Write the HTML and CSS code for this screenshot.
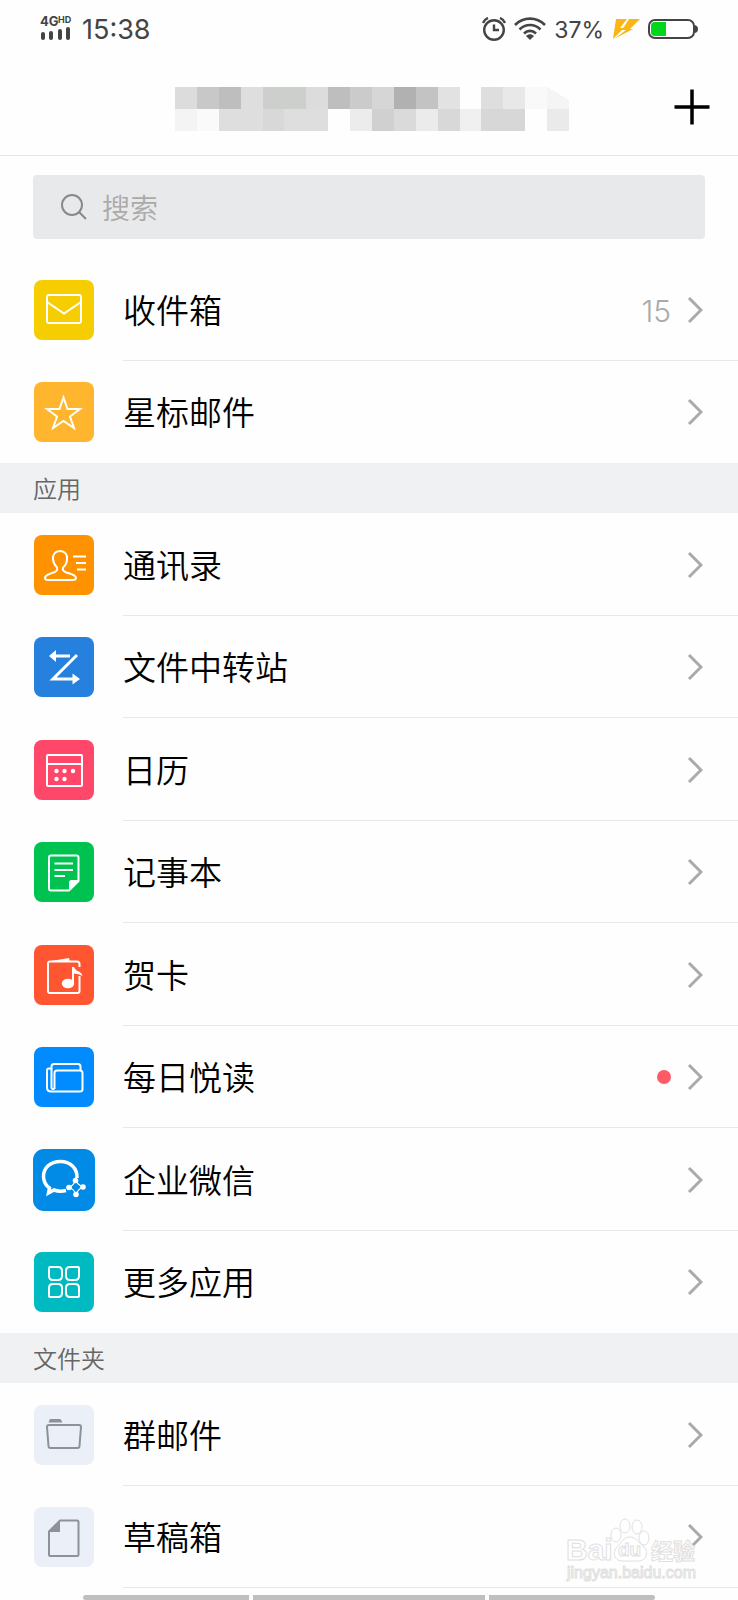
FILE: index.html
```html
<!DOCTYPE html>
<html lang="zh-CN">
<head>
  <meta charset="UTF-8">
  <meta name="viewport" content="width=device-width, initial-scale=1.0">
  <title>邮箱</title>
  <link rel="stylesheet" href="styles.css">
</head>
<body>
  <!-- Status bar -->
  <div class="status-bar">
    <div class="status-left">
      <svg class="signal" width="34" height="30" viewBox="0 0 34 30">
        <text x="0" y="12" font-size="13">4G</text>
        <text x="18" y="9" font-size="9">HD</text>
        <rect x="1" y="18" width="4" height="8" rx="2"/>
        <rect x="9" y="17" width="4" height="9" rx="2"/>
        <rect x="18" y="15" width="4" height="11" rx="2"/>
        <rect x="26" y="13" width="4" height="13" rx="2"/>
      </svg>
      <span class="time">15:38</span>
    </div>
    <div class="status-right">
      <svg width="24" height="24" viewBox="0 0 24 24" fill="none" stroke="#444" stroke-width="2.4">
        <circle cx="12" cy="13" r="9.8"/>
        <path d="M12 7.5V13H17M1 6C2 3.500 3.500 2 6 1M23 6C22 3.500 20.500 2 18 1"/>
      </svg>
      <svg width="32" height="24" viewBox="0 0 32 24" fill="none" stroke="#444" stroke-width="2.6">
        <path d="M1 8C9.500-0.500 22.500-0.500 31 8M5.500 12.500C11.500 6.500 20.500 6.500 26.500 12.500M10 16.500C13.500 13 18.500 13 22 16.500"/>
        <path d="M12 19C14.500 16.800 17.500 16.800 20 19L16 23Z" fill="#444" stroke="none"/>
      </svg>
      <span class="percent">37%</span>
      <svg width="28" height="22" viewBox="0 0 28 22" fill="#fbb515">
        <path d="M4 1H15L8 10H12L3 19 1 21Z"/>
        <path d="M17 1H28L18 11H21L2 21 14 12H10Z"/>
      </svg>
      <svg width="50" height="22" viewBox="0 0 50 22">
        <rect x="1" y="2" width="45" height="18" rx="6" fill="#fff" stroke="#444" stroke-width="2"/>
        <path d="M7 4H18V18H7Q3 18 3 14V8Q3 4 7 4Z" fill="#00d71c"/>
        <path d="M47 7Q50 8 50 11T47 15Z" fill="#444"/>
      </svg>
    </div>
  </div>

  <!-- Title bar, account name is masked -->
  <header class="title-bar">
    <svg class="masked-name" viewBox="0 0 18 2" preserveAspectRatio="none" shape-rendering="crispEdges">
      <rect x="0" y="0" width="1" height="1" fill="#dcdcdc"/>
      <rect x="1" y="0" width="1" height="1" fill="#c8c8c8"/>
      <rect x="2" y="0" width="1" height="1" fill="#bebebe"/>
      <rect x="3" y="0" width="1" height="1" fill="#dedede"/>
      <rect x="4" y="0" width="2" height="1" fill="#cdcfcc"/>
      <rect x="6" y="0" width="1" height="1" fill="#dcdcdc"/>
      <rect x="7" y="0" width="1" height="1" fill="#bebebe"/>
      <rect x="8" y="0" width="1" height="1" fill="#cbcbcb"/>
      <rect x="9" y="0" width="1" height="1" fill="#d6d6d6"/>
      <rect x="10" y="0" width="1" height="1" fill="#b1b1b1"/>
      <rect x="11" y="0" width="1" height="1" fill="#c3c3c3"/>
      <rect x="12" y="0" width="1" height="1" fill="#e2e2e2"/>
      <rect x="14" y="0" width="1" height="1" fill="#dedede"/>
      <rect x="15" y="0" width="1" height="1" fill="#e8e8e8"/>
      <rect x="16" y="0" width="1" height="1" fill="#f9f9f9"/>
      <path d="M17 0 18 0.600V1H17Z" fill="#f5f5f5"/>
      <rect x="0" y="1" width="1" height="1" fill="#f4f4f4"/>
      <rect x="1" y="1" width="1" height="1" fill="#fafafa"/>
      <rect x="2" y="1" width="5" height="1" fill="#dedede"/>
      <rect x="4" y="1" width="1" height="1" fill="#d8d8d8"/>
      <rect x="8" y="1" width="1" height="1" fill="#ececec"/>
      <rect x="9" y="1" width="1" height="1" fill="#d0d0d0"/>
      <rect x="10" y="1" width="1" height="1" fill="#dadada"/>
      <rect x="11" y="1" width="1" height="1" fill="#ebebeb"/>
      <rect x="12" y="1" width="1" height="1" fill="#d8d8d8"/>
      <rect x="13" y="1" width="1" height="1" fill="#f0f0f0"/>
      <rect x="14" y="1" width="2" height="1" fill="#d7d7d7"/>
      <rect x="17" y="1" width="1" height="1" fill="#eaeaea"/>
    </svg>
    <button class="add-button" type="button" aria-label="添加">
      <svg width="36" height="36" viewBox="0 0 36 36"><path d="M18 0.500V35.500M0.500 18H35.500" stroke="#000" stroke-width="3.500"/></svg>
    </button>
  </header>

  <main>
    <!-- Search -->
    <form class="search">
      <label for="search-input" aria-label="搜索">
        <svg width="26" height="26" viewBox="0 0 26 26" fill="none" stroke="#888" stroke-width="2">
          <circle cx="11" cy="11" r="10"/>
          <path d="M18 18L25 25"/>
        </svg>
      </label>
      <input type="text" id="search-input" placeholder="搜索">
    </form>

    <nav class="list">
      <a class="row" href="#inbox">
        <svg class="icon yellow" viewBox="0 0 60 60">
          <rect x="13" y="15" width="34" height="28" rx="2"/>
          <path d="M13 22 30 33.500 47 22"/>
        </svg>
        <span class="name">收件箱</span>
        <span class="count">15</span>
        <svg class="chevron" viewBox="0 0 16 28"><path d="M2 2 14 14 2 26"/></svg>
      </a>
      <a class="row" href="#starred">
        <svg class="icon amber" viewBox="0 0 60 60">
          <path d="M29.500 15.500 33.500 27H46L36 34.500 40 46 29.500 39 19 46 23 34.500 13 27H25.500Z"/>
        </svg>
        <span class="name">星标邮件</span>
        <svg class="chevron" viewBox="0 0 16 28"><path d="M2 2 14 14 2 26"/></svg>
      </a>
    </nav>

    <!-- Apps -->
    <h2 class="section-title">应用</h2>
    <nav class="list">
      <a class="row" href="#contacts">
        <svg class="icon orange" viewBox="0 0 60 60">
          <path d="M26 16C21 16 18.500 19.500 19 24 19.300 28 21 30.500 23 32.500 24 35 22 37 18 38 13 39.500 11 41 11 43 11 44.500 12 45 14 45H38.500C41 45 42 44.500 42 43 42 41 39 39.500 34 38 30 37 28 35 29 32.500 31.500 30.500 33 28 33 24 33.500 19.500 31 16 26 16Z"/>
          <path d="M39 21.500H52M42 28H52M43 34.500H52"/>
        </svg>
        <span class="name">通讯录</span>
        <svg class="chevron" viewBox="0 0 16 28"><path d="M2 2 14 14 2 26"/></svg>
      </a>
      <a class="row" href="#transfer">
        <svg class="icon blue" viewBox="0 0 60 60">
          <path d="M20 19H36M43 18 19 42H40" stroke-width="3"/>
          <path class="solid" d="M15 19 22 13V25ZM46 42 38.500 36.500V47.500Z"/>
        </svg>
        <span class="name">文件中转站</span>
        <svg class="chevron" viewBox="0 0 16 28"><path d="M2 2 14 14 2 26"/></svg>
      </a>
      <a class="row" href="#calendar">
        <svg class="icon pink" viewBox="0 0 60 60">
          <rect x="13" y="15" width="35" height="31" rx="1"/>
          <path d="M13 24H48"/>
          <g class="solid">
            <circle cx="22.500" cy="31" r="2.200"/>
            <circle cx="30.500" cy="31" r="2.200"/>
            <circle cx="39" cy="31" r="2.200"/>
            <circle cx="22.500" cy="39" r="2.200"/>
            <circle cx="30.500" cy="39" r="2.200"/>
          </g>
        </svg>
        <span class="name">日历</span>
        <svg class="chevron" viewBox="0 0 16 28"><path d="M2 2 14 14 2 26"/></svg>
      </a>
      <a class="row" href="#notes">
        <svg class="icon green" viewBox="0 0 60 60">
          <path d="M17 13.500H42.500Q44.500 13.500 44.500 15.500V39L35 48.500H17Q15 48.500 15 46.500V15.500Q15 13.500 17 13.500Z"/>
          <path class="solid" d="M35 49V40.500Q35 38 37.500 38H45Z"/>
          <path d="M20.500 21.500H39M20.500 28H39M20.500 34H31"/>
        </svg>
        <span class="name">记事本</span>
        <svg class="chevron" viewBox="0 0 16 28"><path d="M2 2 14 14 2 26"/></svg>
      </a>
      <a class="row" href="#cards">
        <svg class="icon red" viewBox="0 0 60 60">
          <path d="M45.500 22V19Q45.500 16.500 43 16.500H16Q14 16.500 14 18.500V46Q14 48 16 48H43.500Q45.500 48 45.500 46V31"/>
          <path class="solid" d="M17 16 35 13 36 17H17ZM38 22H40Q42 26 45 26.500 48 28 48.500 31 45 28.500 40 28.500V38H38Z"/>
          <ellipse class="solid" cx="34" cy="38.500" rx="6.200" ry="4.800"/>
        </svg>
        <span class="name">贺卡</span>
        <svg class="chevron" viewBox="0 0 16 28"><path d="M2 2 14 14 2 26"/></svg>
      </a>
      <a class="row" href="#reading">
        <svg class="icon azure" viewBox="0 0 60 60">
          <path d="M23 23.500H46Q48.500 23.500 48.500 26V42Q48.500 44.500 46 44.500H17Q13 44.500 13 40.500V23.500Q13 21.500 15 21.500H17M20.500 42V26Q20.500 23.500 23 23.500M17.500 40V19.500Q17.500 17 20 17H44Q46.500 17 46.500 19.500V23M17.500 40Q17.500 42 19 42H20.500"/>
        </svg>
        <span class="name">每日悦读</span>
        <span class="dot"></span>
        <svg class="chevron" viewBox="0 0 16 28"><path d="M2 2 14 14 2 26"/></svg>
      </a>
      <a class="row" href="#wecom">
        <svg class="icon wecom" viewBox="0 0 62 62">
          <path d="M44 29C44.500 19 37 12.500 27.500 12.500 17 12.500 10.500 19 10.500 27.500 10.500 33 13 36.500 16.500 39L15.500 44 21 41C25 42.500 29 42.500 33 41.500" stroke-width="3.500"/>
          <path d="M36 38.500Q40 37 42.500 31.500 45 36 50 38 45 40 43 45.500 41 40 36 38.500Z" stroke-width="1.200"/>
          <g class="solid">
            <circle cx="36" cy="38.500" r="2.800"/>
            <circle cx="42.500" cy="31.500" r="2.800"/>
            <circle cx="50" cy="38" r="2.800"/>
            <circle cx="43" cy="45.500" r="2.800"/>
          </g>
        </svg>
        <span class="name">企业微信</span>
        <svg class="chevron" viewBox="0 0 16 28"><path d="M2 2 14 14 2 26"/></svg>
      </a>
      <a class="row" href="#more">
        <svg class="icon teal" viewBox="0 0 60 60">
          <path d="M16 15H24Q28 15 28 19V24Q28 28 24 28H19Q15 28 15 24V16Q15 15 16 15Z"/>
          <path d="M44 15H36Q32 15 32 19V24Q32 28 36 28H41Q45 28 45 24V16Q45 15 44 15Z"/>
          <path d="M16 45H24Q28 45 28 41V36Q28 32 24 32H19Q15 32 15 36V44Q15 45 16 45Z"/>
          <path d="M44 45H36Q32 45 32 41V36Q32 32 36 32H41Q45 32 45 36V44Q45 45 44 45Z"/>
        </svg>
        <span class="name">更多应用</span>
        <svg class="chevron" viewBox="0 0 16 28"><path d="M2 2 14 14 2 26"/></svg>
      </a>
    </nav>

    <!-- Folders -->
    <h2 class="section-title">文件夹</h2>
    <nav class="list folders">
      <a class="row" href="#group-mail">
        <svg class="icon pale" viewBox="0 0 60 60">
          <path class="solid" d="M16 14H26.500L28.500 17.500H14.500Z"/>
          <path d="M15 20H45Q47 20 47 22L45.500 41Q45.500 43 43.500 43H16.500Q14.500 43 14.500 41L13 22Q13 20 15 20Z"/>
        </svg>
        <span class="name">群邮件</span>
        <svg class="chevron" viewBox="0 0 16 28"><path d="M2 2 14 14 2 26"/></svg>
      </a>
      <a class="row" href="#drafts">
        <svg class="icon pale" viewBox="0 0 60 60">
          <path d="M26 13.500H43Q44.500 13.500 44.500 15V47.500Q44.500 49 43 49H16.500Q15 49 15 47.500V24.500Z"/>
          <path class="solid" d="M26 13V25H15Z"/>
        </svg>
        <span class="name">草稿箱</span>
        <svg class="chevron" viewBox="0 0 16 28"><path d="M2 2 14 14 2 26"/></svg>
      </a>
    </nav>
  </main>

  <!-- Watermark -->
  <svg class="watermark" width="136" height="68" viewBox="0 0 136 68" fill="#fff" stroke="#e0e0e0">
    <text class="latin" x="1" y="45" font-size="30">Bai</text>
    <ellipse cx="51" cy="20" rx="5" ry="7"/>
    <ellipse cx="60" cy="11" rx="5" ry="7"/>
    <ellipse cx="72" cy="12" rx="5" ry="7"/>
    <ellipse cx="79" cy="23" rx="5" ry="7"/>
    <path d="M65 22C59 22 57 27 52 32 47 37 49 46 57 46 62 46 68 46 73 46 82 46 84 37 79 32 73 27 71 22 65 22Z"/>
    <text class="latin" x="53" y="41" font-size="19">du</text>
    <text class="cjk" x="86" y="44" font-size="22">经验</text>
    <text class="url" x="2" y="63" font-size="16">jingyan.baidu.com</text>
  </svg>

  <!-- System navigation bar -->
  <div class="nav-bar">
    <span></span>
    <span></span>
    <span></span>
  </div>
</body>
</html>
```
FILE: styles.css
```css
* {
  box-sizing: border-box;
}

body {
  margin: 0;
  position: relative;
  min-height: 100vh;
  background-color: #fefefe;
  color: #000;
  font-family: "Noto Sans CJK SC", sans-serif;
  font-weight: 350;
}

svg {
  display: block;
  flex-shrink: 0;
}

/* Status bar */
.status-bar {
  display: flex;
  justify-content: space-between;
  align-items: center;
  height: 58px;
  padding: 0 40px;
  color: #444;
  font-family: Inter, sans-serif;
  font-weight: 400;
}

.status-left,
.status-right {
  display: flex;
  align-items: center;
  gap: 8px;
}

.signal {
  fill: #444;
  font-weight: 700;
  overflow: visible;
}

.time,
.percent {
  padding-top: 2px;
  line-height: 32px;
}

.time {
  font-size: 27px;
}

.percent {
  font-size: 23px;
}

/* Title bar */
.title-bar {
  display: flex;
  justify-content: center;
  align-items: center;
  position: relative;
  height: 98px;
  padding: 4px 28px 0;
  border-bottom: 1px solid #e6e6e6;
}

.masked-name {
  width: 394px;
  height: 44px;
  margin-left: 6px;
}

.add-button {
  position: absolute;
  right: 28px;
  bottom: 30px;
  padding: 0;
  border: none;
  background: none;
  cursor: pointer;
}

/* Search */
.search {
  display: flex;
  align-items: center;
  gap: 15px;
  height: 64px;
  margin: 19px 33px;
  padding: 0 28px;
  border-radius: 4px;
  background-color: #e8e9eb;
}

.search input {
  flex: 1;
  min-width: 0;
  padding: 0;
  border: none;
  outline: none;
  background: none;
  font: inherit;
  font-size: 28px;
}

.search input::placeholder {
  color: #aaa;
}

/* Lists */
.row {
  display: flex;
  align-items: center;
  position: relative;
  height: 102px;
  padding: 0 35px 0 33px;
  color: #000;
  text-decoration: none;
}

.row:nth-child(odd) {
  height: 103px;
}

.row:not(:last-child)::after,
.folders .row::after {
  content: "";
  position: absolute;
  left: 123px;
  right: 0;
  bottom: 0;
  height: 1px;
  background-color: #e8e8e8;
}

.name {
  flex: 1;
  margin-left: 28px;
  padding-bottom: 2px;
  font-size: 33px;
  line-height: 48px;
}

.count {
  padding-top: 2px;
  color: #aaa;
  font-family: Inter, sans-serif;
  font-size: 30px;
  font-weight: 300;
}

.dot {
  width: 14px;
  height: 14px;
  border-radius: 50%;
  background-color: #ff5b66;
}

.chevron {
  width: 16px;
  height: 28px;
  margin-left: 16px;
  fill: none;
  stroke: #aaa;
  stroke-width: 3;
}

.section-title {
  height: 50px;
  margin: 0;
  padding: 0 33px;
  background-color: #f0f1f3;
  color: #666;
  font-size: 24px;
  font-weight: 350;
  line-height: 50px;
}

/* Icons */
.icon {
  width: 60px;
  height: 60px;
  margin: 0 1px;
  border-radius: 8px;
  fill: none;
  stroke: #fff;
  stroke-width: 2;
}

.icon .solid {
  fill: #fff;
  stroke: none;
}

.yellow { background-color: #f5cd00; }
.amber { background-color: #ffb52e; }
.orange { background-color: #ff9200; }
.blue { background-color: #2680de; }
.pink { background-color: #ff476a; }
.green { background-color: #00c250; }
.red { background-color: #ff5530; }
.azure { background-color: #008cff; }
.teal { background-color: #00bac2; }

.wecom {
  width: 62px;
  height: 62px;
  margin: 0;
  border-radius: 11px;
  background-color: #028be6;
}

.pale {
  background-color: #ebeff7;
  stroke: #8b929b;
}

.icon.pale .solid {
  fill: #8b929b;
}

/* Watermark */
.watermark {
  position: absolute;
  right: 37px;
  bottom: 17px;
  pointer-events: none;
}

.watermark .latin {
  font-family: "Liberation Sans", sans-serif;
  font-weight: 700;
}

.watermark .cjk {
  font-weight: 700;
}

.watermark .url {
  font-family: "Liberation Sans", sans-serif;
  font-weight: 400;
}

/* System navigation bar */
.nav-bar {
  display: flex;
  gap: 4px;
  position: absolute;
  left: 83px;
  right: 83px;
  bottom: 0;
  height: 5px;
}

.nav-bar span {
  flex: 5;
  background-color: #bfbfbf;
}

.nav-bar span:nth-child(2) {
  flex: 7;
}

.nav-bar span:first-child {
  border-radius: 3px 0 0 3px;
}

.nav-bar span:last-child {
  border-radius: 0 3px 3px 0;
}
```
